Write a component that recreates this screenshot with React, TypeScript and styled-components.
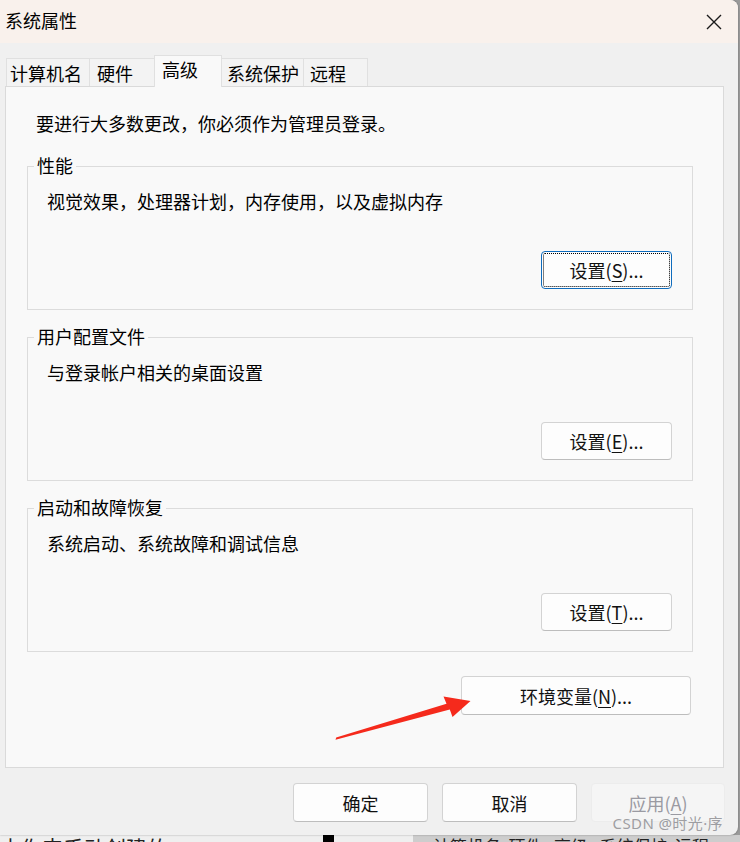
import React from "react";
import styled, { createGlobalStyle } from "styled-components";

const GlobalStyle = createGlobalStyle`
	html, body {
		margin: 0;
		padding: 0;
	}
	body {
		background: #d4d4d4;
		font-family: "Noto Sans CJK SC", "Noto Sans", sans-serif;
		color: #000;
	}
`;

const tabs = [
	{ label: "计算机名", width: 84, pad: 3 },
	{ label: "硬件", width: 66, pad: 7 },
	{ label: "高级", width: 68, pad: 7, active: true },
	{ label: "系统保护", width: 83, pad: 5 },
	{ label: "远程", width: 65, pad: 6 },
];

const groups = [
	{ title: "性能", desc: "视觉效果，处理器计划，内存使用，以及虚拟内存", key: "S", focused: true },
	{ title: "用户配置文件", desc: "与登录帐户相关的桌面设置", key: "E" },
	{ title: "启动和故障恢复", desc: "系统启动、系统故障和调试信息", key: "T" },
];

export default function App() {
	return (
		<Page>
			<GlobalStyle />
			<Window>
				<TitleBar>
					<Title>系统属性</Title>
					<svg width="16" height="16" viewBox="0 0 16 16">
						<path d="M1 1 L15 15 M15 1 L1 15" stroke="#1a1a1a" strokeWidth="1.4" fill="none" />
					</svg>
				</TitleBar>
				<Body>
					<TabStrip>
						{tabs.map((t) => (
							<Tab key={t.label} $active={!!t.active} $width={t.width} $pad={t.pad}>
								{t.label}
							</Tab>
						))}
					</TabStrip>
					<Panel>
						<Intro>要进行大多数更改，你必须作为管理员登录。</Intro>
						<Groups>
							{groups.map((g) => (
								<GroupBox key={g.title}>
									<Legend>{g.title}</Legend>
									<Desc>{g.desc}</Desc>
									<ButtonRow>
										<Button $w={131} $h={38} $focused={!!g.focused}>
											设置(<u>{g.key}</u>)...
										</Button>
									</ButtonRow>
								</GroupBox>
							))}
						</Groups>
						<EnvRow>
							<Button $w={230} $h={39}>
								环境变量(<u>N</u>)...
							</Button>
						</EnvRow>
					</Panel>
					<Footer>
						<Button $w={135} $h={39}>确定</Button>
						<Button $w={135} $h={39}>取消</Button>
						<Button $w={134} $h={39} $disabled>
							应用(<u>A</u>)
						</Button>
					</Footer>
				</Body>
				<Arrow viewBox="330 690 145 55" width="145" height="55">
					<polygon
						points="335.5,739.8 336.2,737.6 446.5,703.8 443.5,696.5 470.5,701 452.5,717 449.8,709.6"
						fill="#f52a1c"
					/>
				</Arrow>
				<Watermark>CSDN @时光·序</Watermark>
			</Window>
			<Backdrop>
				<BackLeft>
					<BackText $size={21}>由你来手动创建的</BackText>
					<BlackMark />
				</BackLeft>
				<BackRight>
					<BackText $size={17}>计算机名 &nbsp;硬件 &nbsp;&nbsp;高级 &nbsp;&nbsp;系统保护 &nbsp;远程</BackText>
				</BackRight>
			</Backdrop>
		</Page>
	);
}

const Page = styled.div`
	width: 740px;
	height: 842px;
	overflow: hidden;
	display: flex;
	flex-direction: column;
	background: #9a9a9a;
`;

const Window = styled.div`
	position: relative;
	z-index: 1;
	width: 738px;
	height: 835px;
	flex: none;
	background: #f0f0f0;
	border-radius: 0 8px 8px 0;
	box-shadow: 0 0 2px rgba(0, 0, 0, 0.35);
	display: flex;
	flex-direction: column;
`;

const TitleBar = styled.div`
	height: 43px;
	flex: none;
	background: #f9f1ec;
	border-top-right-radius: 8px;
	display: flex;
	align-items: center;
	justify-content: space-between;
	padding: 0 16px 0 5px;
	box-sizing: border-box;
`;

const Title = styled.div`
	font-size: 18px;
	line-height: 22px;
	margin-top: -3px;
`;

const Body = styled.div`
	flex: 1;
	display: flex;
	flex-direction: column;
	padding: 0 14px 0 5px;
`;

const TabStrip = styled.div`
	display: flex;
	align-items: flex-end;
	height: 31px;
	margin-top: 12px;
	padding-left: 2px;
	position: relative;
	z-index: 2;
`;

const Tab = styled.div<{ $active: boolean; $width: number; $pad: number }>`
	box-sizing: border-box;
	width: ${(p) => p.$width}px;
	height: ${(p) => (p.$active ? 32 : 28)}px;
	margin-left: -1px;
	margin-bottom: ${(p) => (p.$active ? -1 : 0)}px;
	padding-left: ${(p) => p.$pad}px;
	padding-top: ${(p) => (p.$active ? 2 : 3)}px;
	border: 1px solid #e0e0e0;
	border-bottom: none;
	background: ${(p) => (p.$active ? "#f9f9f9" : "#f3f3f3")};
	font-size: 18px;
	line-height: 22px;
	white-space: nowrap;
	position: relative;
	z-index: ${(p) => (p.$active ? 2 : 1)};
`;

const Panel = styled.div`
	box-sizing: border-box;
	height: 682px;
	border: 1px solid #dadada;
	background: #f9f9f9;
	padding: 24px 30px 0 21px;
	display: flex;
	flex-direction: column;
`;

const Intro = styled.div`
	font-size: 18px;
	line-height: 24px;
	margin-left: 9px;
	margin-bottom: 31px;
`;

const Groups = styled.div`
	display: flex;
	flex-direction: column;
	gap: 27px;
`;

const GroupBox = styled.div`
	position: relative;
	box-sizing: border-box;
	height: 144px;
	border: 1px solid #dcdcdc;
	padding: 22px 20px 20px 19px;
	display: flex;
	flex-direction: column;
`;

const Legend = styled.div`
	position: absolute;
	left: 6px;
	top: -13px;
	padding: 0 3px;
	background: #f9f9f9;
	font-size: 18px;
	line-height: 22px;
`;

const Desc = styled.div`
	font-size: 18px;
	line-height: 24px;
`;

const ButtonRow = styled.div`
	margin-top: auto;
	display: flex;
	justify-content: flex-end;
`;

const Button = styled.div<{ $w: number; $h: number; $focused?: boolean; $disabled?: boolean }>`
	box-sizing: border-box;
	width: ${(p) => p.$w}px;
	height: ${(p) => p.$h}px;
	display: flex;
	align-items: center;
	justify-content: center;
	font-size: 18px;
	line-height: 22px;
	border-radius: 4px;
	background: ${(p) => (p.$disabled ? "#f5f5f5" : "#fdfdfd")};
	color: ${(p) => (p.$disabled ? "#9a9aa2" : "#111")};
	border: 1px solid ${(p) => (p.$focused ? "#0f6cbd" : p.$disabled ? "#ececec" : "#d3d3d3")};
	border-bottom-color: ${(p) => (p.$focused ? "#0f6cbd" : p.$disabled ? "#ececec" : "#bdbdbd")};
	outline: ${(p) => (p.$focused ? "1px dotted #000" : "none")};
	outline-offset: -3px;

	u {
		text-underline-offset: 3px;
	}
`;

const EnvRow = styled.div`
	display: flex;
	justify-content: flex-end;
	margin-top: 24px;
	margin-right: 2px;
`;

const Footer = styled.div`
	display: flex;
	justify-content: flex-end;
	gap: 14px;
	padding: 15px 0 0 0;
	margin-right: -1px;
`;

const Arrow = styled.svg`
	position: absolute;
	left: 330px;
	top: 690px;
	pointer-events: none;
`;

const Watermark = styled.div`
	position: absolute;
	right: 15px;
	bottom: 2px;
	font-family: "Noto Sans", "Noto Sans CJK SC", sans-serif;
	font-size: 15px;
	line-height: 20px;
	color: rgba(135, 135, 140, 0.8);
	letter-spacing: 0.4px;
`;

const Backdrop = styled.div`
	flex: 1;
	display: flex;
	overflow: hidden;
`;

const BackLeft = styled.div`
	width: 413px;
	background: #efefef;
	position: relative;
	overflow: hidden;
`;

const BackRight = styled.div`
	flex: 1;
	background: #cdcdcd;
	padding-left: 20px;
	overflow: hidden;
`;

const BackText = styled.div<{ $size: number }>`
	font-size: ${(p) => p.$size}px;
	line-height: ${(p) => p.$size + 4}px;
	margin-top: 0;
	white-space: nowrap;
	color: #222;
`;

const BlackMark = styled.div`
	position: absolute;
	left: 323px;
	top: 0;
	width: 11px;
	height: 8px;
	background: #000;
`;
